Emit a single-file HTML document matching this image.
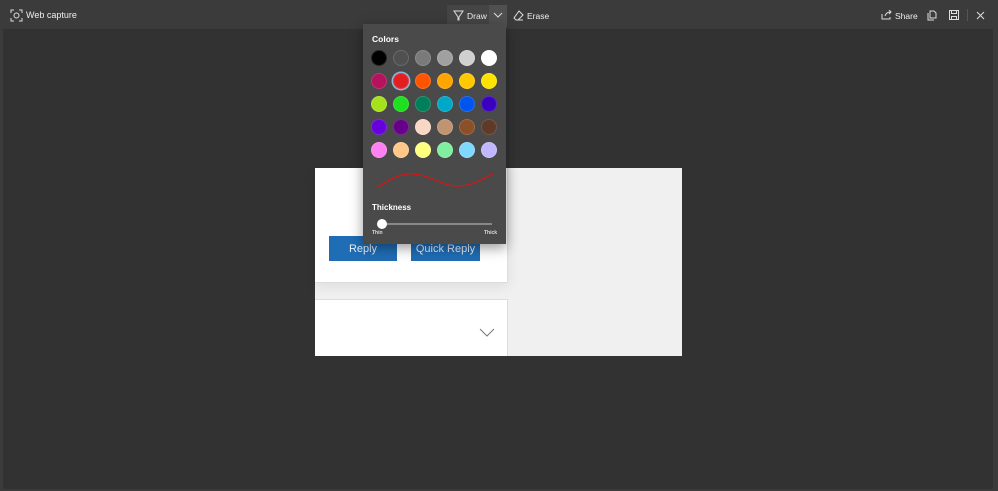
<!DOCTYPE html>
<html><head><style>
*{margin:0;padding:0;box-sizing:border-box}
body{width:998px;height:491px;background:#3b3b3b;position:relative;overflow:hidden;font-family:"Liberation Sans",sans-serif;color:#fff}
.a{position:absolute}
.c{position:absolute;width:16px;height:16px;border-radius:50%;border:1px solid rgba(255,255,255,.15)}
</style></head><body>
<div class="a" style="left:3px;top:29px;width:990px;height:460px;background:#323232"></div>
<svg class="a" style="left:10px;top:9px" width="13" height="13" viewBox="0 0 13 13" fill="none" stroke="#ddd" stroke-width="1"><path d="M1 4V1h3M9 1h3v3M12 9v3H9M4 12H1V9"/><circle cx="6.5" cy="6.5" r="2.5"/></svg>
<div class="a" style="left:26px;top:10px;font-size:9px;color:#eee">Web capture</div>
<div class="a" style="left:447px;top:5px;width:42px;height:22px;background:#454545"></div>
<div class="a" style="left:489px;top:5px;width:18px;height:22px;background:#505050"></div>
<svg class="a" style="left:453px;top:10px" width="11" height="11" viewBox="0 0 11 11" fill="none" stroke="#ddd"><path d="M1 1h9L6 7v3H5V7z"/></svg>
<div class="a" style="left:467px;top:11px;font-size:8.5px;color:#eee">Draw</div>
<svg class="a" style="left:493px;top:12px" width="10" height="6" viewBox="0 0 10 6" fill="none" stroke="#ddd"><path d="M1 1l4 4 4-4"/></svg>
<svg class="a" style="left:513px;top:10px" width="11" height="11" viewBox="0 0 11 11" fill="none" stroke="#ddd"><path d="M6 1l4 4-5 5H3L1 8z M3 10h7"/></svg>
<div class="a" style="left:527px;top:11px;font-size:8.5px;color:#eee">Erase</div>
<svg class="a" style="left:881px;top:10px" width="11" height="10" viewBox="0 0 11 10" fill="none" stroke="#ddd"><path d="M1 4v5h8V7M4 6c1-3 3-4 6-4M8 0l2 2-2 2"/></svg>
<div class="a" style="left:895px;top:11px;font-size:8.5px;color:#eee">Share</div>
<svg class="a" style="left:927px;top:10px" width="10" height="11" viewBox="0 0 10 11" fill="none" stroke="#ddd"><path d="M3 1h4l2 2v5H3zM1 3v7h6"/></svg>
<svg class="a" style="left:949px;top:10px" width="10" height="10" viewBox="0 0 10 10" fill="none" stroke="#ddd"><path d="M.5 .5h9v9h-9zM2.5 .5v3h5v-3M2.5 9.5v-3h5v3"/></svg>
<div class="a" style="left:967px;top:9px;width:1px;height:12px;background:#555"></div>
<svg class="a" style="left:976px;top:11px" width="9" height="9" viewBox="0 0 9 9" stroke="#ddd"><path d="M1 1l7 7M8 1l-7 7"/></svg>
<div class="a" style="left:315px;top:168px;width:367px;height:188px;background:#f0f0f0"></div>
<div class="a" style="left:315px;top:168px;width:193px;height:115px;background:#fff;border-right:1px solid #ddd;border-bottom:1px solid #ddd;box-shadow:0 4px 12px rgba(0,0,0,.08)"></div>
<div class="a" style="left:315px;top:299px;width:193px;height:57px;background:#fff;border-right:1px solid #ddd;border-top:1px solid #ddd"></div>
<div class="a" style="left:329px;top:236px;width:68px;height:25px;background:#1f6db5;color:#e8f0fa;font-size:11px;text-align:center;line-height:27px">Reply</div>
<div class="a" style="left:411px;top:236px;width:69px;height:25px;background:#1f6db5;color:#e8f0fa;font-size:11px;text-align:center;line-height:27px">Quick Reply</div>
<svg class="a" style="left:479px;top:328px" width="16" height="9" viewBox="0 0 16 9" fill="none" stroke="#777"><path d="M1 1l7 7 7-7"/></svg>
<div class="a" style="left:363px;top:24px;width:143px;height:220px;background:#4a4a4a;box-shadow:0 4px 12px rgba(0,0,0,.4)"></div>
<div class="a" style="left:372px;top:34px;font-size:8.5px;font-weight:bold">Colors</div>
<div id="g"></div>
<svg class="a" style="left:363px;top:160px" width="143" height="84">
<path d="M15 27C30 17 40 13 50 14C68 15 78 26 95 26C108 26 118 20 130 14" fill="none" stroke="#d01818" stroke-width="1.3"/>
<line x1="15" y1="64" x2="129" y2="64" stroke="#888" stroke-width="2"/>
<circle cx="19" cy="64" r="5" fill="#fff"/>
</svg>
<div class="a" style="left:372px;top:203px;font-size:8px;font-weight:bold">Thickness</div>
<div class="a" style="left:372px;top:230px;font-size:5px;font-weight:bold;color:#ddd">Thin</div>
<div class="a" style="left:484px;top:230px;font-size:5px;font-weight:bold;color:#ddd">Thick</div>
<script>
var cols=[["#000","#505050","#7a7a7a","#a0a0a0","#d0d0d0","#fff"],["#b4135d","#e31e1e","#ff5500","#ffa500","#ffc800","#ffe300"],["#a6e21b","#1ee01e","#00805a","#00a8c8","#0055ee","#3a00c0"],["#6600dd","#660088","#f8d8c4","#bf9470","#8c5028","#5e3a28"],["#ff80f0","#ffc888","#ffff80","#80f0a0","#80d8ff","#c0b8ff"]];
var h="";cols.forEach(function(r,i){r.forEach(function(c,j){h+='<div class="c" style="left:'+(371+j*22)+'px;top:'+(50+i*23)+'px;background:'+c+(i==1&&j==1?';box-shadow:0 0 0 1.5px #8ab4e0':'')+'"></div>'})});
document.getElementById("g").innerHTML=h;
</script>
</body></html>
